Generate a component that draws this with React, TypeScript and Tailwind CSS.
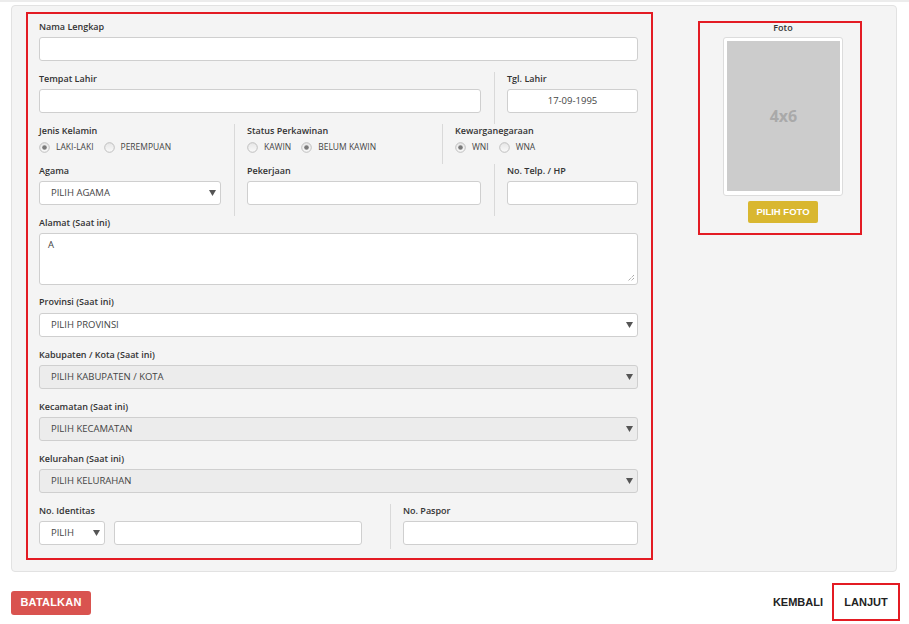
import React from "react";

const Label = ({ children, className = "" }: { children: React.ReactNode; className?: string }) => (
  <div className={`h-[14px] text-[9px] leading-[14px] font-semibold text-[#333] whitespace-nowrap ${className}`}>{children}</div>
);

const Input = ({ className = "", children }: { className?: string; children?: React.ReactNode }) => (
  <div className={`h-[24px] mt-[3px] bg-white border border-[#cfcfcf] rounded-[3px] ${className}`}>{children}</div>
);

const Arrow = () => (
  <svg width="7" height="6" viewBox="0 0 7 6" className="shrink-0">
    <path d="M0 0 L7 0 L3.5 6 Z" fill="#555" />
  </svg>
);

const Select = ({ text, disabled = false, className = "" }: { text: string; disabled?: boolean; className?: string }) => (
  <div
    className={`h-[24px] mt-[3px] border border-[#cfcfcf] rounded-[3px] flex items-center justify-between pl-[11px] pr-[4px] ${
      disabled ? "bg-[#ececec]" : "bg-white"
    } ${className}`}
  >
    <span className="text-[9.5px] text-[#444] whitespace-nowrap">{text}</span>
    <Arrow />
  </div>
);

const Radio = ({ checked, label }: { checked: boolean; label: string }) => (
  <div className="flex items-center mr-[10px]">
    <svg width="11" height="11" viewBox="0 0 11 11">
      <defs>
        <linearGradient id="rg" x1="0" y1="0" x2="0" y2="1">
          <stop offset="0" stopColor="#e6e6e6" />
          <stop offset="1" stopColor="#fafafa" />
        </linearGradient>
      </defs>
      <circle cx="5.5" cy="5.5" r="4.8" fill="url(#rg)" stroke="#b9b9b9" strokeWidth="0.9" />
      {checked && <circle cx="5.5" cy="5.5" r="2.3" fill="#7a7a7a" />}
    </svg>
    <span className="ml-[6px] text-[8.5px] text-[#444] whitespace-nowrap">{label}</span>
  </div>
);

export default function App() {
  return (
    <div className="w-[909px] h-[624px] bg-white font-['Open_Sans',sans-serif] overflow-hidden">
      <div className="h-[2px] bg-[#ececec]" />
      <div className="ml-[11px] mt-[3px] w-[886px] h-[567px] bg-[#f4f4f4] border border-[#e2e2e2] rounded-[4px] flex pl-[14px] pt-[6px]">
        {/* main form */}
        <div className="w-[627px] h-[548px] border-2 border-[#e31b23] pt-[6px] pl-[11px] pr-[13px]">
          <div className="pb-[11px]">
            <Label>Nama Lengkap</Label>
            <Input />
          </div>
          <div className="flex">
            <div className="w-[442px] pb-[11px]">
              <Label>Tempat Lahir</Label>
              <Input />
            </div>
            <div className="ml-[13px] border-l border-[#d9d9d9] pl-[12px] w-[144px] pb-[11px]">
              <Label>Tgl. Lahir</Label>
              <Input className="flex items-center justify-center">
                <span className="text-[9.5px] text-[#444]">17-09-1995</span>
              </Input>
            </div>
          </div>
          <div className="flex">
            <div className="w-[195px] pr-[13px] pb-[10px]">
              <Label>Jenis Kelamin</Label>
              <div className="mt-[2px] h-[14px] flex items-center">
                <Radio checked label="LAKI-LAKI" />
                <Radio checked={false} label="PEREMPUAN" />
              </div>
            </div>
            <div className="w-[208px] border-l border-[#d9d9d9] pl-[12px] pr-[13px] pb-[10px]">
              <Label>Status Perkawinan</Label>
              <div className="mt-[2px] h-[14px] flex items-center">
                <Radio checked={false} label="KAWIN" />
                <Radio checked label="BELUM KAWIN" />
              </div>
            </div>
            <div className="w-[196px] border-l border-[#d9d9d9] pl-[12px] pb-[10px]">
              <Label>Kewarganegaraan</Label>
              <div className="mt-[2px] h-[14px] flex items-center">
                <Radio checked label="WNI" />
                <Radio checked={false} label="WNA" />
              </div>
            </div>
          </div>
          <div className="flex">
            <div className="w-[195px] pr-[13px] pb-[11px]">
              <Label>Agama</Label>
              <Select text="PILIH AGAMA" />
            </div>
            <div className="w-[260px] border-l border-[#d9d9d9] pl-[12px] pr-[13px] pb-[11px]">
              <Label>Pekerjaan</Label>
              <Input />
            </div>
            <div className="w-[144px] border-l border-[#d9d9d9] pl-[12px] pb-[11px]">
              <Label>No. Telp. / HP</Label>
              <Input />
            </div>
          </div>
          <div className="pb-[10px]">
            <Label>Alamat (Saat ini)</Label>
            <div className="relative h-[52px] mt-[3px] bg-white border border-[#cfcfcf] rounded-[3px] pl-[8px] pt-[4px]">
              <div className="text-[9.5px] leading-[14px] text-[#444]">A</div>
              <svg width="8" height="8" viewBox="0 0 8 8" className="absolute right-[2px] bottom-[2px]">
                <path d="M7 1 L1 7 M7 4 L4 7" stroke="#777" strokeWidth="0.9" strokeDasharray="1 1" />
              </svg>
            </div>
          </div>
          <div className="pb-[11px]">
            <Label>Provinsi (Saat ini)</Label>
            <Select text="PILIH PROVINSI" className="mt-[4px]" />
          </div>
          <div className="pb-[11px]">
            <Label>Kabupaten / Kota (Saat ini)</Label>
            <Select text="PILIH KABUPATEN / KOTA" disabled />
          </div>
          <div className="pb-[11px]">
            <Label>Kecamatan (Saat ini)</Label>
            <Select text="PILIH KECAMATAN" disabled />
          </div>
          <div className="pb-[11px]">
            <Label>Kelurahan (Saat ini)</Label>
            <Select text="PILIH KELURAHAN" disabled />
          </div>
          <div className="flex">
            <div className="w-[351px] pb-[4px]">
              <Label>No. Identitas</Label>
              <div className="flex">
                <Select text="PILIH" className="w-[66px]" />
                <Input className="w-[248px] ml-[9px]" />
              </div>
            </div>
            <div className="w-[248px] border-l border-[#d9d9d9] pl-[12px] pb-[4px]">
              <Label>No. Paspor</Label>
              <Input />
            </div>
          </div>
        </div>

        {/* photo */}
        <div className="ml-[45px] mt-[9px] w-[164px] h-[214px] border-2 border-[#e31b23]">
          <div className="text-[9px] leading-[10px] font-semibold text-[#333] text-center pl-[6px]">Foto</div>
          <div className="ml-[23px] mt-[4px] w-[120px] h-[159px] bg-white border border-[#dcdcdc] rounded-[3px] pt-[3px] pl-[3px]">
            <div className="w-[113px] h-[150px] bg-[#cccccc] flex items-center justify-center">
              <span className="text-[16px] font-bold text-[#a9a9a9]">4x6</span>
            </div>
          </div>
          <div className="ml-[48px] mt-[5px] w-[70px] h-[22px] bg-[#d9b730] rounded-[2px] flex items-center justify-center">
            <span className="font-['Liberation_Sans',sans-serif] text-[9.5px] font-bold text-white">PILIH FOTO</span>
          </div>
        </div>
      </div>

      {/* bottom bar */}
      <div className="mt-[11px] ml-[11px] mr-[9px] flex items-center justify-between h-[38px] font-['Liberation_Sans',sans-serif]">
        <div className="w-[80px] h-[24px] bg-[#d9534f] rounded-[3px] flex items-center justify-center mt-[1px]">
          <span className="text-[11px] font-bold text-white tracking-[0.2px]">BATALKAN</span>
        </div>
        <div className="flex items-center">
          <span className="text-[11px] font-bold text-[#222]">KEMBALI</span>
          <div className="ml-[9px] w-[68px] h-[38px] border-2 border-[#e31b23] flex items-center justify-center">
            <span className="text-[11px] font-bold text-[#222]">LANJUT</span>
          </div>
        </div>
      </div>
    </div>
  );
}
